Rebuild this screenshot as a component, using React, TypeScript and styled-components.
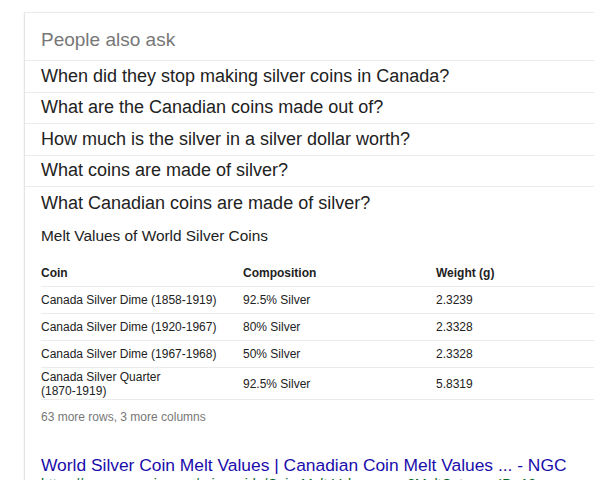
import styled, { createGlobalStyle } from "styled-components";

const GlobalStyle = createGlobalStyle`
  html, body {
    margin: 0;
    padding: 0;
    background: #ffffff;
    overflow: hidden;
  }
  body {
    font-family: Arial, "Liberation Sans", sans-serif;
  }
`;

const Page = styled.div`
  width: 594px;
  height: 480px;
  padding: 12px 0 0 24px;
  box-sizing: border-box;
  overflow: hidden;
`;

const Card = styled.div`
  width: 640px;
  border-top: 1px solid #ebebeb;
  border-left: 1px solid #e4e4e4;
  box-shadow: 0 1px 2px rgba(0, 0, 0, 0.08);
  background: #fff;
`;

const Header = styled.div`
  height: 41px;
  padding: 6px 0 0 16px;
  display: flex;
  align-items: center;
  font-size: 19px;
  color: #777;
  border-bottom: 1px solid #ebebeb;
`;

const Question = styled.div<{ $open?: boolean }>`
  height: ${(p) => (p.$open ? "32px" : "30.5px")};
  padding-left: 16px;
  display: flex;
  align-items: center;
  font-size: 18px;
  color: #222;
  border-bottom: ${(p) => (p.$open ? "none" : "1px solid #ebebeb")};
`;

const Answer = styled.div`
  padding: 0 0 0 16px;
`;

const TableTitle = styled.div`
  font-size: 15.4px;
  color: #222;
  padding-top: 8px;
  height: 30px;
`;

const Table = styled.table`
  border-collapse: collapse;
  width: 100%;
  margin-top: 3px;
  font-size: 12px;
  color: #222;
`;

const Th = styled.th<{ $w?: number }>`
  text-align: left;
  font-weight: bold;
  height: 26px;
  padding: 0;
  width: ${(p) => (p.$w ? `${p.$w}px` : "auto")};
  border-bottom: 1px solid #ebebeb;
  vertical-align: middle;
`;

const Td = styled.td<{ $tall?: boolean }>`
  height: ${(p) => (p.$tall ? "31px" : "26px")};
  padding: 0;
  line-height: 14px;
  border-bottom: 1px solid #ebebeb;
  vertical-align: middle;
`;

const More = styled.div`
  font-size: 12px;
  color: #777;
  padding-top: 10px;
  height: 30px;
`;

const Link = styled.a`
  display: block;
  margin-top: 14px;
  font-size: 17.4px;
  color: #1a0dab;
  text-decoration: none;
  line-height: 22px;
`;

const Url = styled.div`
  font-size: 14px;
  color: #006621;
  line-height: 16px;
  white-space: nowrap;
`;

const questions = [
  "When did they stop making silver coins in Canada?",
  "What are the Canadian coins made out of?",
  "How much is the silver in a silver dollar worth?",
  "What coins are made of silver?",
];

const rows = [
  ["Canada Silver Dime (1858-1919)", "92.5% Silver", "2.3239"],
  ["Canada Silver Dime (1920-1967)", "80% Silver", "2.3328"],
  ["Canada Silver Dime (1967-1968)", "50% Silver", "2.3328"],
  ["Canada Silver Quarter (1870-1919)", "92.5% Silver", "5.8319"],
];

export default function App() {
  return (
    <Page>
      <GlobalStyle />
      <Card>
        <Header>People also ask</Header>
        {questions.map((q) => (
          <Question key={q}>{q}</Question>
        ))}
        <Question $open>What Canadian coins are made of silver?</Question>
        <Answer>
          <TableTitle>Melt Values of World Silver Coins</TableTitle>
          <Table>
            <thead>
              <tr>
                <Th $w={202}>Coin</Th>
                <Th $w={193}>Composition</Th>
                <Th>Weight (g)</Th>
              </tr>
            </thead>
            <tbody>
              {rows.map((r, i) => (
                <tr key={r[0]}>
                  <Td $tall={i === 3}>
                    {i === 3 ? (
                      <>
                        Canada Silver Quarter
                        <br />
                        (1870-1919)
                      </>
                    ) : (
                      r[0]
                    )}
                  </Td>
                  <Td $tall={i === 3}>{r[1]}</Td>
                  <Td $tall={i === 3}>{r[2]}</Td>
                </tr>
              ))}
            </tbody>
          </Table>
          <More>63 more rows, 3 more columns</More>
          <Link href="#">
            World Silver Coin Melt Values | Canadian Coin Melt Values ... - NGC
          </Link>
          <Url>https://www.ngccoin.com/priceguide/Coin-Melt-Values.aspx?MeltCategoryID=18</Url>
        </Answer>
      </Card>
    </Page>
  );
}
